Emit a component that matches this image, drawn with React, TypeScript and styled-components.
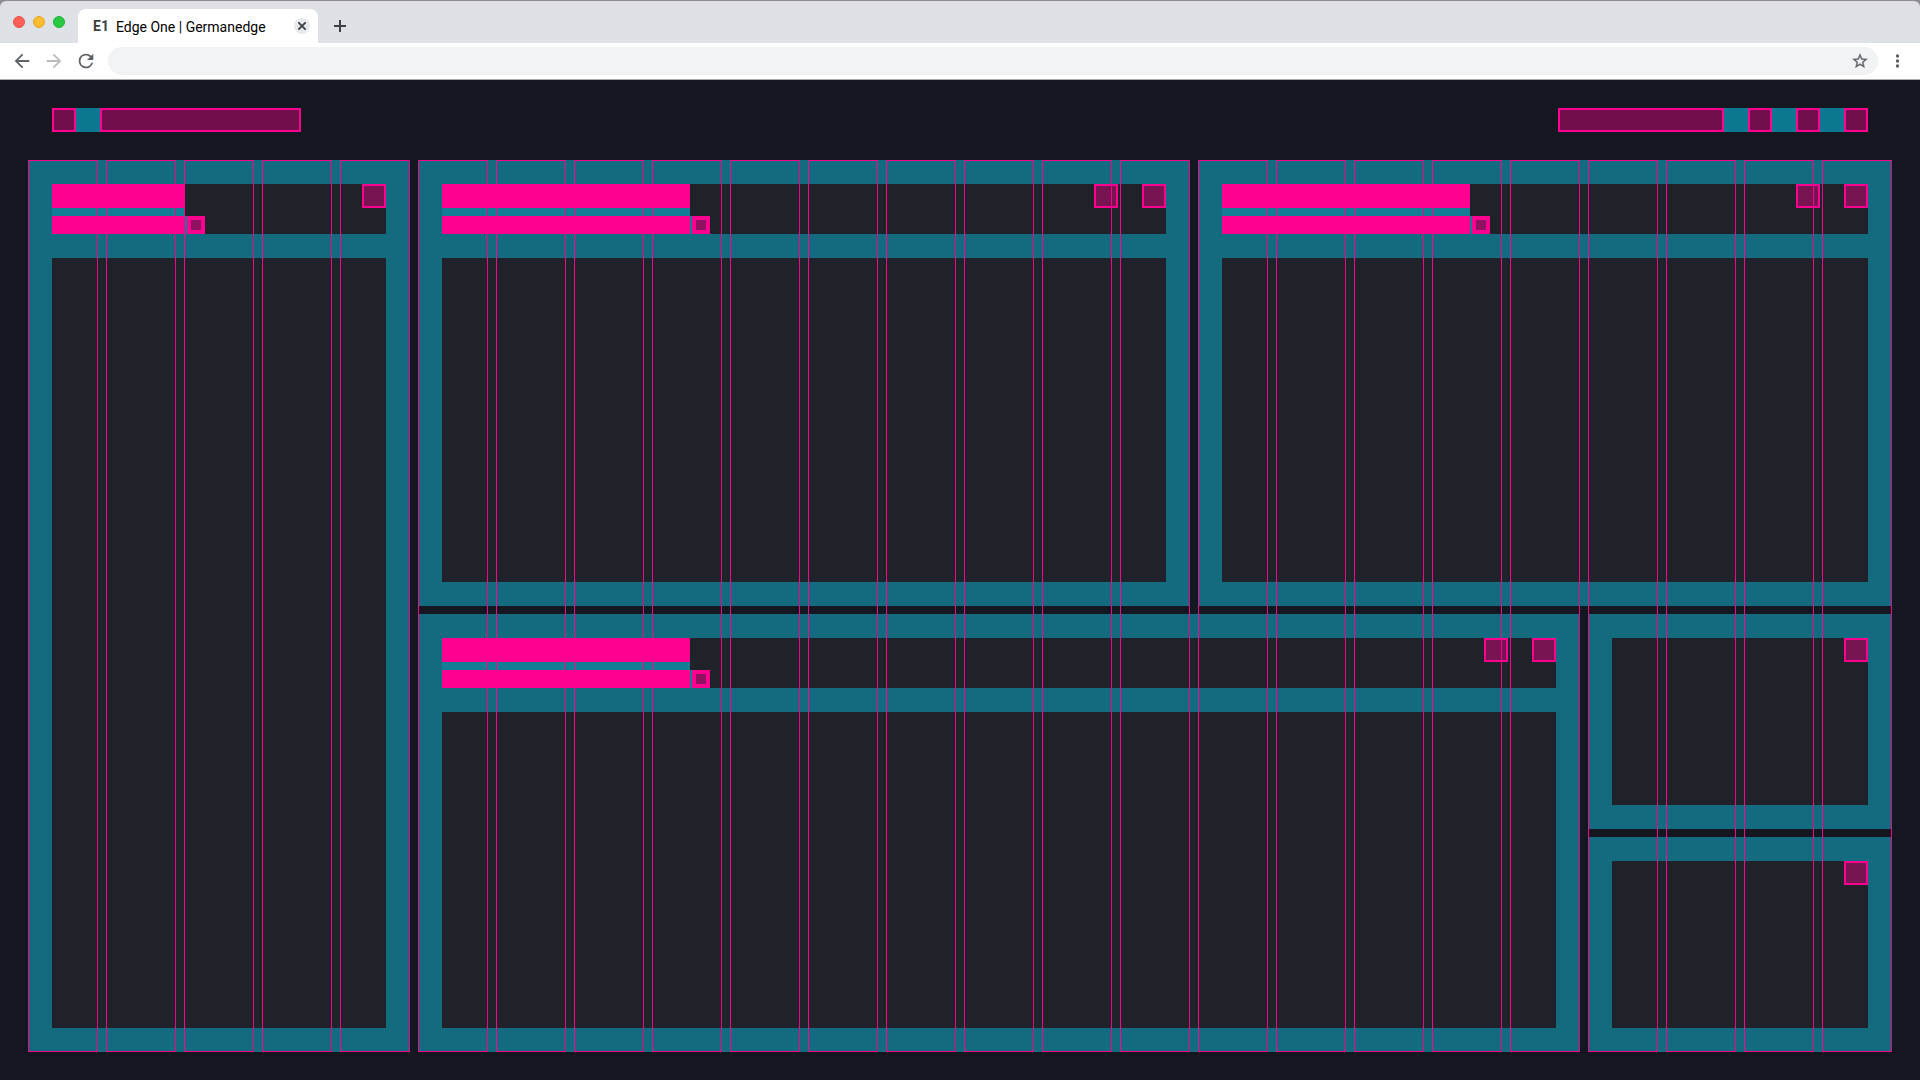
import React from "react";
import styled, { createGlobalStyle } from "styled-components";

const color = {
  page: "#14171f",
  padding: "#136b7f",
  surface: "#1f2229",
  spacing: "#0b7890",
  textGap: "#127d94",
  pink: "#ff0090",
  icon: "#5f6368",
};

const GlobalStyle = createGlobalStyle`
  * { box-sizing: border-box; }
  body { margin: 0; background: ${color.page}; font-family: Roboto, "Liberation Sans", sans-serif; }
  button { padding: 0; margin: 0; border: 0; background: none; font: inherit; color: inherit; cursor: pointer; }
`;

const Window = styled.div`
  min-height: 100vh;
  display: flex;
  flex-direction: column;
  background: ${color.page};
`;

const BrowserChrome = styled.header`
  background: #8e8c90;
  padding-top: 1px;
  border-bottom: 1px solid #aaacae;
`;

const TabStrip = styled.div`
  display: flex;
  align-items: flex-end;
  height: 42px;
  padding-left: 13px;
  background: linear-gradient(#e0dde4, #dee1e6 8px);
  border-radius: 6px 6px 0 0;
`;

const TrafficLights = styled.div`
  display: flex;
  gap: 8px;
  height: 42px;
  align-items: center;
`;

const Light = styled.button<{ $fill: string; $edge: string }>`
  && {
    width: 12px;
    height: 12px;
    border-radius: 50%;
    background: ${(p) => p.$fill};
    border: 1px solid ${(p) => p.$edge};
  }
`;

const Tab = styled.div`
  display: flex;
  align-items: center;
  width: 240px;
  height: 34px;
  margin-left: 13px;
  padding: 0 8px 0 15px;
  border-radius: 8px 8px 0 0;
  background: #fff;
`;

const Favicon = styled.span`
  width: 23px;
  font-size: 14px;
  line-height: 20px;
  font-weight: 700;
  color: #3c4043;
`;

const TabTitle = styled.span`
  flex: 1;
  padding-top: 2px;
  font-size: 14px;
  line-height: 20px;
  color: #000;
`;

const TabClose = styled.button`
  && {
    display: grid;
    place-items: center;
    width: 16px;
    height: 16px;
    border-radius: 50%;
    background: #e8eaed;
  }
`;

const NewTab = styled.button`
  display: grid;
  place-items: center;
  width: 44px;
  height: 34px;
`;

const Toolbar = styled.div`
  display: flex;
  align-items: center;
  height: 36px;
  padding: 0 8px;
  background: #fff;
`;

const NavButton = styled.button`
  display: grid;
  place-items: center;
  width: 28px;
  height: 28px;
`;

const NavGroup = styled.nav`
  display: flex;
  gap: 4px;
`;

const AddressBar = styled.div`
  flex: 1;
  display: flex;
  align-items: center;
  height: 28px;
  margin: 0 6px 0 8px;
  padding: 0 4px 0 14px;
  border-radius: 14px;
  background: #f1f3f4;
`;

const AddressInput = styled.input`
  flex: 1;
  border: 0;
  outline: 0;
  background: transparent;
  font: 14px/20px Roboto, sans-serif;
`;

const AppBar = styled.div`
  display: flex;
  justify-content: space-between;
  padding: 28px 52px;
`;

const AppBarGroup = styled.div`
  display: flex;
  background: ${color.spacing};
  gap: 24px;
`;

const Placeholder = styled.div<{ $width: number }>`
  width: ${(p) => p.$width}px;
  height: 24px;
  border: 2px solid ${color.pink};
  background: #720e4b;
`;

const IconSlot = styled.button`
  && {
    position: relative;
    z-index: 2;
    width: 24px;
    height: 24px;
    border: 2px solid ${color.pink};
    background: rgba(255, 0, 144, 0.4);
  }
`;

const AppBarIcon = styled(IconSlot)`
  && { background: #720e4b; }
`;

const Workspace = styled.main`
  position: relative;
  flex: 1;
  display: grid;
  margin: 0 28px 28px;
`;

const Panels = styled.div`
  display: grid;
  grid-template-columns: repeat(24, minmax(0, 1fr));
  grid-template-rows: 446fr 215fr 215fr;
  gap: 8px;
`;

const Panel = styled.section<{ $col: string; $row: string }>`
  grid-column: ${(p) => p.$col};
  grid-row: ${(p) => p.$row};
  display: flex;
  flex-direction: column;
  gap: 24px;
  padding: 24px;
  background: ${color.padding};
`;

const PanelHeader = styled.div`
  display: flex;
  justify-content: space-between;
  align-items: flex-start;
  background: ${color.surface};
`;

const PanelBody = styled.div`
  flex: 1;
  display: flex;
  justify-content: flex-end;
  align-items: flex-start;
  background: ${color.surface};
`;

const Actions = styled.div`
  display: flex;
  gap: 24px;
`;

const TitleBlock = styled.div<{ $width: number }>`
  width: ${(p) => p.$width}px;
`;

const TitleBar = styled.div`
  position: relative;
  z-index: 2;
  height: 24px;
  background: ${color.pink};
`;

const TitleGap = styled.div`
  height: 8px;
  background: ${color.textGap};
`;

const SubtitleRow = styled.div`
  display: flex;
  width: max-content;
  gap: 2px;
  background: ${color.textGap};
`;

const SubtitleBar = styled.div<{ $width: number }>`
  position: relative;
  z-index: 2;
  width: ${(p) => p.$width}px;
  height: 18px;
  background: ${color.pink};
`;

const InfoSlot = styled.button`
  && {
    position: relative;
    z-index: 2;
    width: 18px;
    height: 18px;
    border: 4px solid ${color.pink};
    background: #8e125f;
  }
`;

/* Column guides lie over the panels. */
const Guides = styled.div`
  position: absolute;
  inset: 0;
  z-index: 1;
  display: grid;
  grid-template-columns: repeat(24, minmax(0, 1fr));
  gap: 8px;
  pointer-events: none;
`;

const Guide = styled.div`
  border: 1px solid ${color.pink};
  border-right-color: #ee058c;
`;

function Heading({ width, actions }: { width: number; actions: number }) {
  return (
    <PanelHeader>
      <TitleBlock $width={width}>
        <TitleBar />
        <TitleGap />
        <SubtitleRow>
          <SubtitleBar $width={width} />
          <InfoSlot aria-label="Info" />
        </SubtitleRow>
      </TitleBlock>
      <Actions>
        {Array.from({ length: actions }, (_, i) => (
          <IconSlot key={i} aria-label={`Panel action ${i + 1}`} />
        ))}
      </Actions>
    </PanelHeader>
  );
}

const panels = [
  { col: "1 / span 5", row: "1 / span 3", title: 133, actions: 1 },
  { col: "6 / span 10", row: "1", title: 248, actions: 2 },
  { col: "16 / span 9", row: "1", title: 248, actions: 2 },
  { col: "6 / span 15", row: "2 / span 2", title: 248, actions: 2 },
  { col: "21 / span 4", row: "2", title: 0, actions: 1 },
  { col: "21 / span 4", row: "3", title: 0, actions: 1 },
];

export default function App() {
  return (
    <Window>
      <GlobalStyle />
      <BrowserChrome>
        <TabStrip>
          <TrafficLights>
            <Light aria-label="Close window" $fill="#ff5f57" $edge="#e9534b" />
            <Light aria-label="Minimise window" $fill="#febc2e" $edge="#e5a52a" />
            <Light aria-label="Zoom window" $fill="#28c840" $edge="#24b33a" />
          </TrafficLights>
          <Tab>
            <Favicon>E1</Favicon>
            <TabTitle>Edge One | Germanedge</TabTitle>
            <TabClose aria-label="Close tab">
              <svg width="8" height="8" viewBox="0 0 8 8" stroke="#3c4043" strokeWidth="1.8">
                <path d="M.3.3l7.4 7.4M7.7.3L.3 7.7" />
              </svg>
            </TabClose>
          </Tab>
          <NewTab aria-label="New tab">
            <svg width="12" height="12" viewBox="0 0 12 12" stroke="#3c4043" strokeWidth="2">
              <path d="M6 0v12M0 6h12" />
            </svg>
          </NewTab>
        </TabStrip>
        <Toolbar>
          <NavGroup>
            <NavButton aria-label="Back">
              <svg width="22" height="22" viewBox="0 0 24 24" fill={color.icon}>
                <path d="M20 11H7.83l5.59-5.59L12 4l-8 8 8 8 1.41-1.41L7.83 13H20v-2z" />
              </svg>
            </NavButton>
            <NavButton aria-label="Forward">
              <svg width="22" height="22" viewBox="0 0 24 24" fill="#babcbe">
                <path d="M12 4l-1.41 1.41L16.17 11H4v2h12.17l-5.58 5.59L12 20l8-8z" />
              </svg>
            </NavButton>
            <NavButton aria-label="Reload">
              <svg width="22" height="22" viewBox="0 0 24 24" fill={color.icon}>
                <path d="M17.65 6.35A7.96 7.96 0 0 0 12 4a8 8 0 1 0 7.73 10h-2.08A6 6 0 1 1 12 6c1.66 0 3.14.69 4.22 1.78L13 11h7V4l-2.35 2.35z" />
              </svg>
            </NavButton>
          </NavGroup>
          <AddressBar>
            <AddressInput aria-label="Address" />
            <NavButton aria-label="Bookmark">
              <svg width="18" height="18" viewBox="0 0 24 24" fill={color.icon} stroke={color.icon} strokeWidth="0.4">
                <path d="M22 9.24l-7.19-.62L12 2 9.19 8.63 2 9.24l5.46 4.73L5.82 21 12 17.27 18.18 21l-1.63-7.03L22 9.24zM12 15.4l-3.76 2.27 1-4.28-3.32-2.88 4.38-.38L12 6.1l1.71 4.04 4.38.38-3.32 2.88 1 4.28L12 15.4z" />
              </svg>
            </NavButton>
          </AddressBar>
          <NavButton aria-label="Menu">
            <svg width="4" height="14" viewBox="0 0 4 14" fill={color.icon}>
              <circle cx="1.5" cy="2" r="1.7" />
              <circle cx="1.5" cy="7" r="1.7" />
              <circle cx="1.5" cy="12" r="1.7" />
            </svg>
          </NavButton>
        </Toolbar>
      </BrowserChrome>
      <AppBar>
        <AppBarGroup>
          <AppBarIcon aria-label="Navigation" />
          <Placeholder $width={201} />
        </AppBarGroup>
        <AppBarGroup>
          <Placeholder $width={166} />
          <AppBarIcon aria-label="App action 1" />
          <AppBarIcon aria-label="App action 2" />
          <AppBarIcon aria-label="App action 3" />
        </AppBarGroup>
      </AppBar>
      <Workspace>
        <Panels>
          {panels.map((p) => (
            <Panel key={p.col + p.row} $col={p.col} $row={p.row}>
              {p.title > 0 && <Heading width={p.title} actions={p.actions} />}
              <PanelBody>
                {p.title === 0 && <IconSlot aria-label="Panel action" />}
              </PanelBody>
            </Panel>
          ))}
        </Panels>
        <Guides>
          {Array.from({ length: 24 }, (_, i) => (
            <Guide key={i} />
          ))}
        </Guides>
      </Workspace>
    </Window>
  );
}
